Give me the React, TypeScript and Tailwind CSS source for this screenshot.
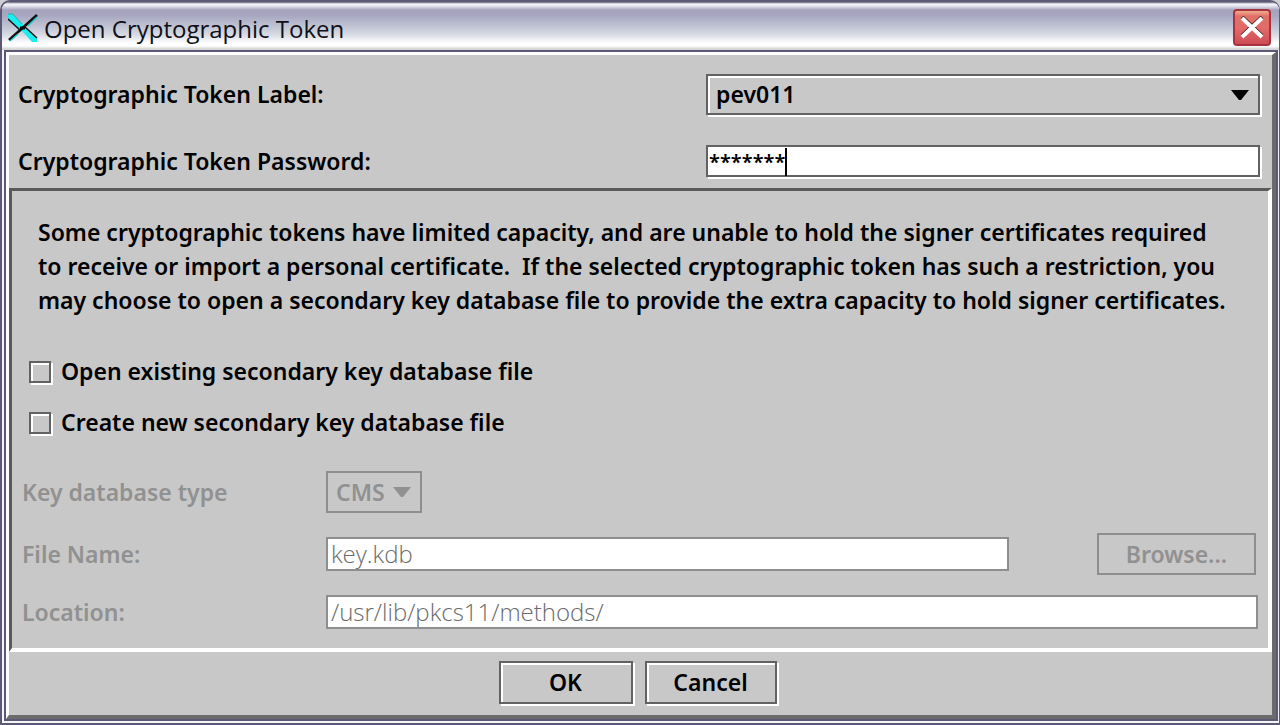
import { useState } from "react";
import type { ReactNode } from "react";

const raised =
  "border-2 border-[#626262] bg-[#c8c8c8] shadow-[2px_2px_0_#ffffff,inset_2px_2px_0_#ffffff]";
const disabledField =
  "h-[34px] border-2 border-[#8e8e8e] bg-white px-[3px] pb-[2px] font-['Open_Sans',sans-serif] text-[24px] leading-[28px] font-light text-[#6b6b6b]";

function TitleIcon() {
  return (
    <svg className="h-[30px] w-[30px]" viewBox="0 0 30 30" aria-hidden="true">
      <path d="M0 0H4L14 10L17 14L29 25V29H24L14 18L0 5Z" fill="#19eef0" />
      <path d="M0 6L13 18M17 14L29 25" stroke="#101010" strokeWidth="1.5" />
      <path d="M0 1L5 1L14 11" fill="none" stroke="#6d8f98" />
      <path d="M1 27L29 2" stroke="#101010" strokeWidth="2.6" />
      <path d="M2 28L10 21M20 13L29 4" stroke="#19c8cc" strokeWidth="1.3" />
      <path d="M12 15H17" stroke="#101010" strokeWidth="3" />
    </svg>
  );
}

function Arrow({ className }: { className: string }) {
  return (
    <svg className={className} viewBox="0 0 18 10" aria-hidden="true">
      <path d="M0 0H18L10 10H8Z" fill="currentColor" />
    </svg>
  );
}

function CheckRow({ children }: { children: ReactNode }) {
  return (
    <label className="flex h-[31px] items-center gap-[10px]">
      <input
        type="checkbox"
        className={`${raised} h-[22px] w-[22px] appearance-none checked:bg-[#626262]`}
      />
      <span>{children}</span>
    </label>
  );
}

export default function App() {
  const [password, setPassword] = useState("*******");

  return (
    <div className="min-h-screen bg-[#cfcfd6]">
      <div className="flex min-h-screen flex-col rounded-t-[10px] border-2 border-r border-[#5c5976] bg-[#f4f4fa] font-['Noto_Sans',sans-serif] text-[23px] leading-[31px] font-semibold text-black">
        <header className="flex h-[48px] items-center justify-between rounded-t-[8px] bg-[linear-gradient(#5c5976_0px,#f6f6fa_2px,#e4e4ee_4px,#a5a2bb_8px,#a9a8c2_14px,#c4c8d6_26px,#dcdfe6_34px,#ffffff_41px,#ffffff_44px,#d4d4d4_47px)] pt-[3px] pr-2 pl-[6px]">
          <div className="flex items-center gap-[6px]">
            <TitleIcon />
            <h1 className="pt-[2px] font-['Open_Sans',sans-serif] text-[24px] leading-[32px] font-normal text-[#101018]">
              Open Cryptographic Token
            </h1>
          </div>
          <button
            type="button"
            aria-label="Close"
            className="flex h-[37px] w-[38px] items-center justify-center rounded-[4px] border-2 border-[#a63240] bg-[linear-gradient(#eeb08c_0px,#e2706a_5px,#e06a68_18px,#cf4e56_32px)]"
          >
            <svg className="h-[24px] w-[26px]" viewBox="0 0 26 24" aria-hidden="true">
              <path d="M3 1L23 20M23 1L3 20" stroke="#3a1216" strokeWidth="4" />
              <path d="M3 2L23 21M23 2L3 21" stroke="#ffffff" strokeWidth="4" />
            </svg>
          </button>
        </header>

        <main className="mr-px mb-[2px] ml-[2px] flex flex-1 flex-col border-2 border-[#5c5976]">
          <div className="flex flex-1 flex-col border-t-[3px] border-r-4 border-b-4 border-l-[3px] border-t-white border-r-[#6b6b6b] border-b-[#6b6b6b] border-l-white bg-[#c8c8c8]">
            <div className="grid grid-cols-[688px_1fr] items-center gap-y-[30px] pt-[19px] pr-[12px] pb-[11px] pl-[9px]">
              <label htmlFor="token">Cryptographic Token Label:</label>
              <div className="relative">
                <select
                  id="token"
                  className={`${raised} block h-[41px] w-full appearance-none pl-[8px]`}
                >
                  <option>pev011</option>
                </select>
                <Arrow className="pointer-events-none absolute top-[16px] right-[11px] h-[10px] w-[18px]" />
              </div>
              <label htmlFor="password">Cryptographic Token Password:</label>
              <div className="relative">
                <input
                  id="password"
                  type="text"
                  autoComplete="off"
                  value={password}
                  onChange={(e) => setPassword(e.target.value)}
                  className="block h-[32px] w-full border-2 border-[#626262] bg-white px-px text-[20px] leading-[28px] shadow-[2px_2px_0_#ffffff] outline-none"
                />
                <span className="pointer-events-none absolute top-[3px] left-[79px] h-[28px] w-[2px] bg-black" />
              </div>
            </div>

            <section className="flex flex-1 flex-col border-t-[3px] border-r-4 border-b-4 border-l-[3px] border-t-[#5a5a5a] border-r-white border-b-white border-l-[#5a5a5a]">
              <p className="pt-[24px] pl-[26px] leading-[34px] whitespace-nowrap">
                Some cryptographic tokens have limited capacity, and are unable to hold the signer certificates required
                <br />
                to receive or import a personal certificate.&nbsp; If the selected cryptographic token has such a restriction, you
                <br />
                may choose to open a secondary key database file to provide the extra capacity to hold signer certificates.
              </p>

              <div className="flex flex-col gap-[20px] pt-[39px] pl-[17px]">
                <CheckRow>Open existing secondary key database file</CheckRow>
                <CheckRow>Create new secondary key database file</CheckRow>
              </div>

              <div className="flex flex-col gap-[20px] pt-[33px] pr-[10px] pb-[18px] pl-[10px] text-[#919191]">
                <div className="flex items-center">
                  <label htmlFor="type" className="w-[304px]">Key database type</label>
                  <div className="relative">
                    <select
                      id="type"
                      disabled
                      className="block h-[42px] w-[96px] appearance-none border-2 border-[#8e8e8e] pl-[8px] opacity-100"
                    >
                      <option>CMS</option>
                    </select>
                    <Arrow className="pointer-events-none absolute top-[16px] right-[11px] h-[10px] w-[18px]" />
                  </div>
                </div>
                <div className="flex items-center">
                  <label htmlFor="file" className="w-[304px]">File Name:</label>
                  <input id="file" type="text" disabled defaultValue="key.kdb" className={`${disabledField} mr-[88px] min-w-0 flex-1`} />
                  <button
                    type="button"
                    disabled
                    className="mr-[2px] h-[42px] w-[159px] border-2 border-[#8e8e8e] text-[#919191]"
                  >
                    Browse...
                  </button>
                </div>
                <div className="flex items-center">
                  <label htmlFor="location" className="w-[304px]">Location:</label>
                  <input id="location" type="text" disabled defaultValue="/usr/lib/pkcs11/methods/" className={`${disabledField} min-w-0 flex-1`} />
                </div>
              </div>
            </section>

            <footer className="flex justify-center gap-[12px] pt-[9px] pr-[6px] pb-[11px]">
              <button type="button" className={`${raised} h-[43px] w-[134px]`}>OK</button>
              <button type="button" className={`${raised} h-[43px] w-[132px]`}>Cancel</button>
            </footer>
          </div>
        </main>
      </div>
    </div>
  );
}
